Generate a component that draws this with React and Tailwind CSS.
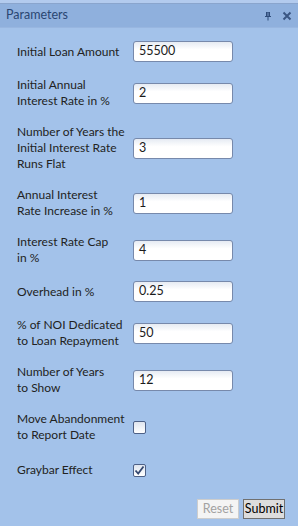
import { useState } from "react";

const rows = [
  { label: ["Initial Loan Amount"], value: "55500" },
  { label: ["Initial Annual", "Interest Rate in %"], value: "2" },
  { label: ["Number of Years the", "Initial Interest Rate", "Runs Flat"], value: "3" },
  { label: ["Annual Interest", "Rate Increase in %"], value: "1" },
  { label: ["Interest Rate Cap", "in %"], value: "4" },
  { label: ["Overhead in %"], value: "0.25" },
  { label: ["% of NOI Dedicated", "to Loan Repayment"], value: "50" },
  { label: ["Number of Years", "to Show"], value: "12" },
];

function Label({ lines }) {
  return (
    <div className="w-[116px] text-[12px] leading-[16px] text-[#222222]">
      {lines.map((l, i) => (
        <div key={i} className="whitespace-nowrap">{l}</div>
      ))}
    </div>
  );
}

function Box({ checked }) {
  return (
    <div className="w-[13px] h-[13px] rounded-[2px] border border-[#4e6187] bg-gradient-to-b from-[#dfe5ef] to-[#ffffff] flex items-center justify-center">
      {checked && (
        <svg width="11" height="11" viewBox="0 0 11 11">
          <path d="M1.5 5.5 L4.2 8.5 L9.5 1.5" fill="none" stroke="#34476f" strokeWidth="1.8" />
        </svg>
      )}
    </div>
  );
}

export default function App() {
  const [vals] = useState(rows.map((r) => r.value));

  return (
    <div
      className="w-[298px] h-[526px] bg-[#a3c2ea] flex flex-col overflow-hidden"
      style={{ fontFamily: 'Lato, "Noto Sans", sans-serif' }}
    >
      {/* top strip */}
      <div className="h-[4px] bg-[#b3cbee] border-b border-[#8aa5cd]" />
      {/* title bar */}
      <div className="h-[24px] bg-[#8fb0dd] border-b border-[#98b6e0] flex items-center pl-[6px] pr-[6px]">
        <span className="text-[12.5px] text-[#2a4672] flex-1">Parameters</span>
        <svg width="10" height="10" viewBox="0 0 10 10" className="mr-[9px]">
          <path d="M3 1 H7 V5 H8 V6 H5.5 V9.5 H4.5 V6 H2 V5 H3 Z" fill="#2f4c7a" />
          <path d="M5 1.5 V5" stroke="#8fb0dd" strokeWidth="0.8" />
        </svg>
        <svg width="10" height="10" viewBox="0 0 10 10">
          <path d="M1.5 1.5 L8.5 8.5 M8.5 1.5 L1.5 8.5" stroke="#3a5683" strokeWidth="2" />
        </svg>
      </div>

      {/* form */}
      <div className="flex flex-col gap-[15px] pl-[17px] pt-[13px]">
        {rows.map((r, i) => (
          <div key={i} className="flex items-center">
            <Label lines={r.label} />
            <div className="w-[100px] h-[21px] rounded-[3px] border border-[#7789ab] bg-gradient-to-b from-[#e6ebf3] to-[#ffffff] to-[40%] flex items-center pl-[5px] text-[12.5px] text-[#1b1b1b]">
              {vals[i]}
            </div>
          </div>
        ))}
        <div className="flex items-center">
          <Label lines={["Move Abandonment", "to Report Date"]} />
          <Box />
        </div>
        <div className="flex items-center mt-[4px]">
          <Label lines={["Graybar Effect"]} />
          <Box checked />
        </div>
      </div>

      <div className="flex-1" />
      <div className="flex justify-end gap-[4px] pr-[13px] pb-[7px]">
        <button className="w-[42px] h-[20px] border border-[#cdcdcd] bg-[#f4f4f4] text-[12.5px] text-[#a2a2a2] leading-none">
          Reset
        </button>
        <button className="w-[42px] h-[20px] border border-[#707070] bg-[#dddddd] text-[12.5px] text-black leading-none">
          Submit
        </button>
      </div>
    </div>
  );
}
